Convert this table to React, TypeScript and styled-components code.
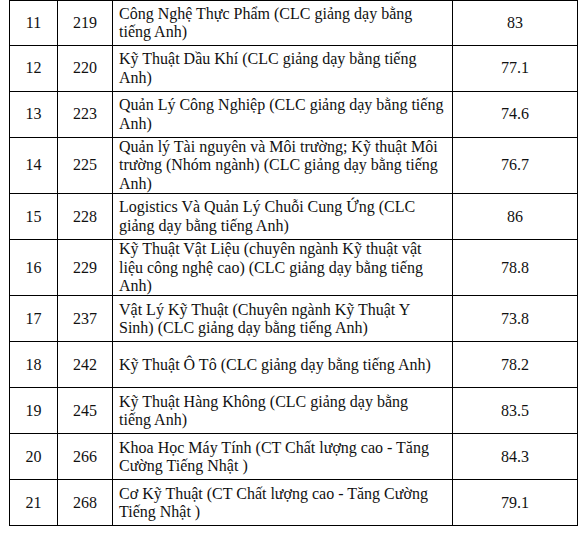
import React from "react";
import styled, { createGlobalStyle } from "styled-components";

const GlobalStyle = createGlobalStyle`
  html, body {
    margin: 0;
    padding: 0;
    background: #ffffff;
  }
  body {
    font-family: "Liberation Serif", "Times New Roman", serif;
    color: #000000;
  }
`;

const Page = styled.div`
  padding-left: 9px;
`;

const Table = styled.table`
  border-collapse: collapse;
  table-layout: fixed;
  width: 568px;
  font-family: "Liberation Serif", "Times New Roman", serif;
  font-size: 16px;
  line-height: 18.4px;
  color: #111111;
`;

const Col = styled.col<{ $w: number }>`
  width: ${(p) => p.$w}px;
`;

const Row = styled.tr<{ $h: number }>`
  height: ${(p) => p.$h}px;
`;

const Cell = styled.td<{ $align?: "left" | "center" }>`
  border: 1px solid #000000;
  padding: 0 6px;
  vertical-align: middle;
  text-align: ${(p) => p.$align ?? "center"};
`;

const Line = styled.span`
  display: block;
  white-space: nowrap;
`;

type Item = { stt: number; code: string; name: string[]; score: string };

const rows: Item[] = [
  { stt: 11, code: "219", name: ["Công Nghệ Thực Phẩm (CLC giảng dạy bằng", "tiếng Anh)"], score: "83" },
  { stt: 12, code: "220", name: ["Kỹ Thuật Dầu Khí (CLC giảng dạy bằng tiếng", "Anh)"], score: "77.1" },
  { stt: 13, code: "223", name: ["Quản Lý Công Nghiệp (CLC giảng dạy bằng tiếng", "Anh)"], score: "74.6" },
  {
    stt: 14,
    code: "225",
    name: ["Quản lý Tài nguyên và Môi trường; Kỹ thuật Môi", "trường (Nhóm ngành) (CLC giảng dạy bằng tiếng", "Anh)"],
    score: "76.7",
  },
  { stt: 15, code: "228", name: ["Logistics Và Quản Lý Chuỗi Cung Ứng (CLC", "giảng dạy bằng tiếng Anh)"], score: "86" },
  {
    stt: 16,
    code: "229",
    name: ["Kỹ Thuật Vật Liệu (chuyên ngành Kỹ thuật vật", "liệu công nghệ cao) (CLC giảng dạy bằng tiếng", "Anh)"],
    score: "78.8",
  },
  { stt: 17, code: "237", name: ["Vật Lý Kỹ Thuật (Chuyên ngành Kỹ Thuật Y", "Sinh) (CLC giảng dạy bằng tiếng Anh)"], score: "73.8" },
  { stt: 18, code: "242", name: ["Kỹ Thuật Ô Tô (CLC giảng dạy bằng tiếng Anh)"], score: "78.2" },
  { stt: 19, code: "245", name: ["Kỹ Thuật Hàng Không (CLC giảng dạy bằng", "tiếng Anh)"], score: "83.5" },
  { stt: 20, code: "266", name: ["Khoa Học Máy Tính (CT Chất lượng cao - Tăng", "Cường Tiếng Nhật )"], score: "84.3" },
  { stt: 21, code: "268", name: ["Cơ Kỹ Thuật (CT Chất lượng cao - Tăng Cường", "Tiếng Nhật )"], score: "79.1" },
];

const widths = [48, 55, 340, 125];

export default function App() {
  return (
    <>
      <GlobalStyle />
      <Page>
        <Table>
          <colgroup>
            {widths.map((w, i) => (
              <Col key={i} $w={w} />
            ))}
          </colgroup>
          <tbody>
            {rows.map((r, i) => (
              <Row key={r.stt} $h={i === 0 ? 45 : 46}>
                <Cell>{r.stt}</Cell>
                <Cell>{r.code}</Cell>
                <Cell $align="left">
                  {r.name.map((l, j) => (
                    <Line key={j}>{l}</Line>
                  ))}
                </Cell>
                <Cell>{r.score}</Cell>
              </Row>
            ))}
          </tbody>
        </Table>
      </Page>
    </>
  );
}
